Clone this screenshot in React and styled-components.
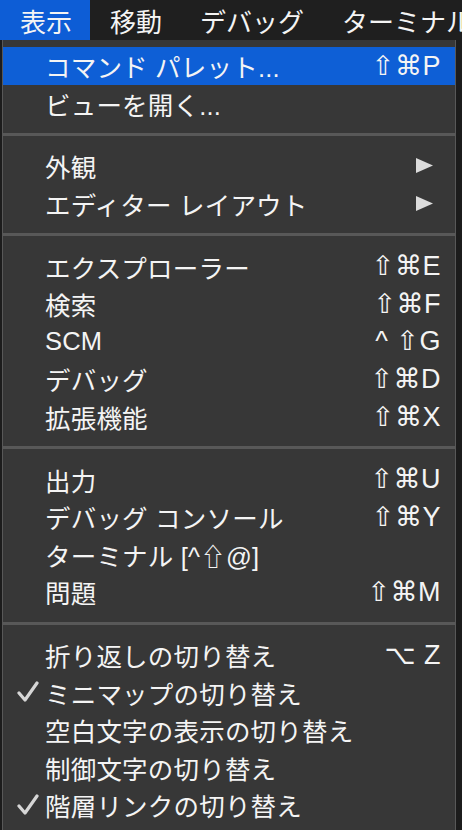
import React from "react";
import styled, { createGlobalStyle } from "styled-components";

const Global = createGlobalStyle`
  html, body { margin: 0; padding: 0; background: #1e1e1e; }
  body { font-family: "Liberation Sans", "Noto Sans CJK JP", sans-serif; }
`;

const Screen = styled.div`
  width: 462px;
  height: 830px;
  overflow: hidden;
  background: #1c1c1c;
  color: #f2f2f2;
  font-family: "Liberation Sans", "Noto Sans CJK JP", sans-serif;
`;

const MenuBar = styled.div`
  height: 40px;
  display: flex;
  align-items: stretch;
  background: #1f1f1f;
  white-space: nowrap;
  overflow: hidden;
`;

const MenuTitle = styled.div`
  display: flex;
  align-items: center;
  padding: 0 18px 0 20px;
  font-size: 26px;
  color: #f4f4f4;
  background: ${(p) => (p.$active ? "#0d5dd6" : "transparent")};
`;

const Panel = styled.div`
  margin-left: 2px;
  width: 454px;
  height: 800px;
  box-sizing: border-box;
  background: #373737;
  border: 1px solid #585858;
  border-top: none;
  border-radius: 0 0 6px 6px;
  padding-top: 7px;
`;

const Item = styled.div`
  height: 37.6px;
  display: grid;
  grid-template-columns: 42px 1fr auto;
  align-items: center;
  padding-right: 14px;
  font-size: 25.5px;
  white-space: nowrap;
  background: ${(p) => (p.$highlight ? "#0e5fd6" : "transparent")};
  color: #f4f4f4;
`;

const CheckCell = styled.div`
  display: flex;
  align-items: center;
  justify-content: flex-end;
  padding-right: 6px;
`;

const Label = styled.span`
  letter-spacing: 0.2px;
`;

const Shortcut = styled.span`
  font-family: "Liberation Sans", "DejaVu Sans", sans-serif;
  font-size: 27px;
  letter-spacing: 0.5px;
  white-space: pre;
`;

const Separator = styled.div`
  height: 25px;
  display: flex;
  align-items: center;
  &::after {
    content: "";
    display: block;
    width: 100%;
    height: 3px;
    background: #585858;
  }
`;

const ArrowWrap = styled.span`
  display: flex;
  margin-right: 7px;
`;

const Check = () => (
  <svg width="22" height="22" viewBox="0 0 22 22">
    <path d="M2 12 L8 19 L20 2" fill="none" stroke="#d6d6d6" strokeWidth="3.2" strokeLinecap="round" strokeLinejoin="round" />
  </svg>
);

const Arrow = () => (
  <ArrowWrap>
    <svg width="19" height="17" viewBox="0 0 19 17">
      <path d="M1 1 L18 8.5 L1 16 Z" fill="#dcdcdc" />
    </svg>
  </ArrowWrap>
);

const groups = [
  [
    { label: "コマンド パレット...", sc: "⇧⌘P", hl: true },
    { label: "ビューを開く..." },
  ],
  [
    { label: "外観", sub: true },
    { label: "エディター レイアウト", sub: true },
  ],
  [
    { label: "エクスプローラー", sc: "⇧⌘E" },
    { label: "検索", sc: "⇧⌘F" },
    { label: "SCM", sc: "^ ⇧G" },
    { label: "デバッグ", sc: "⇧⌘D" },
    { label: "拡張機能", sc: "⇧⌘X" },
  ],
  [
    { label: "出力", sc: "⇧⌘U" },
    { label: "デバッグ コンソール", sc: "⇧⌘Y" },
    { label: "ターミナル [^⇧@]" },
    { label: "問題", sc: "⇧⌘M" },
  ],
  [
    { label: "折り返しの切り替え", sc: "⌥ Z" },
    { label: "ミニマップの切り替え", check: true },
    { label: "空白文字の表示の切り替え" },
    { label: "制御文字の切り替え" },
    { label: "階層リンクの切り替え", check: true },
  ],
];

export default function App() {
  return (
    <Screen>
      <Global />
      <MenuBar>
        <MenuTitle $active>表示</MenuTitle>
        <MenuTitle>移動</MenuTitle>
        <MenuTitle>デバッグ</MenuTitle>
        <MenuTitle>ターミナル</MenuTitle>
      </MenuBar>
      <Panel>
        {groups.map((g, gi) => (
          <React.Fragment key={gi}>
            {gi > 0 && <Separator />}
            {g.map((it) => (
              <Item key={it.label} $highlight={it.hl}>
                <CheckCell>{it.check && <Check />}</CheckCell>
                <Label>{it.label}</Label>
                {it.sub ? <Arrow /> : <Shortcut>{it.sc || ""}</Shortcut>}
              </Item>
            ))}
          </React.Fragment>
        ))}
      </Panel>
    </Screen>
  );
}
